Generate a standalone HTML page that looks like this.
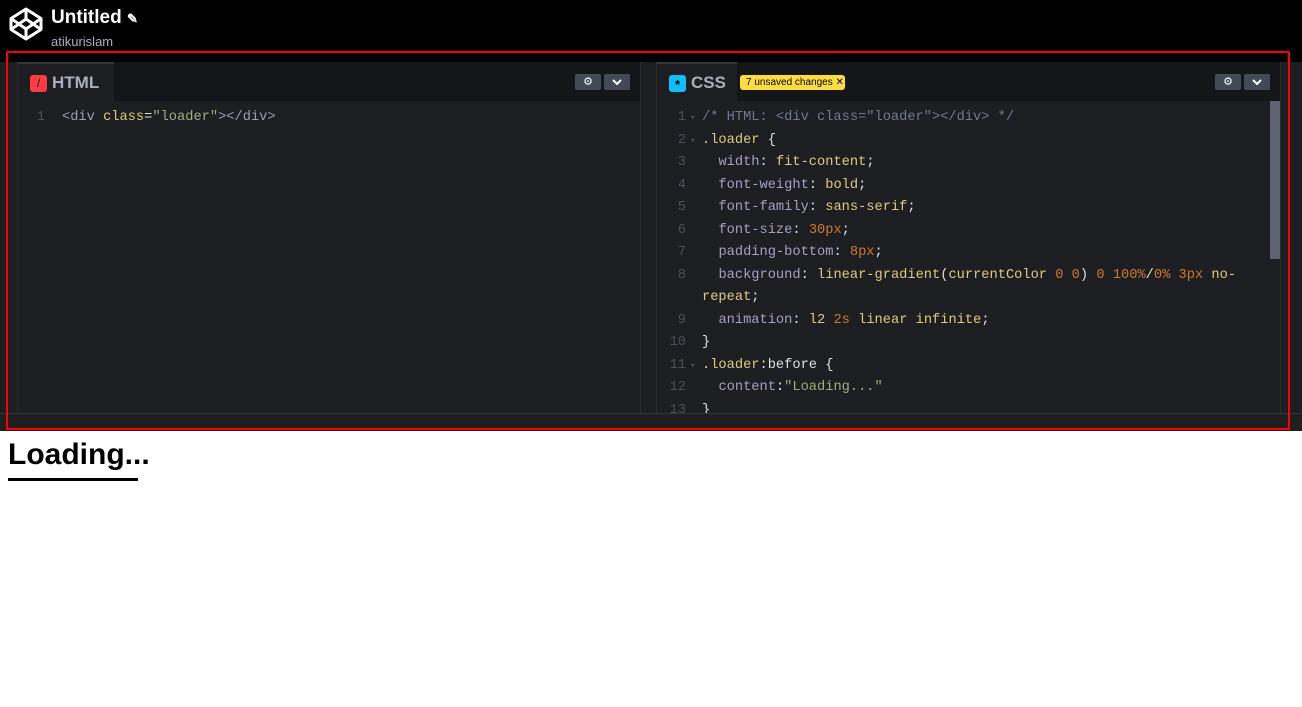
<!DOCTYPE html>
<html><head><meta charset="utf-8"><style>
*{margin:0;padding:0;box-sizing:border-box}
body{width:1302px;height:707px;background:#fff;font-family:"Liberation Sans",sans-serif;position:relative;overflow:hidden}
.top{position:absolute;left:0;top:0;width:1302px;height:431px;background:#000}
.ed{position:absolute;left:0;top:62px;width:1302px;height:369px;background:#1d1e22}
.hdr{position:absolute;top:62px;height:39px;background:#151618}
.tab{position:absolute;top:62px;height:39px;background:#1d1e22;border-top:2px solid #34363e;color:#aaaebc;font-weight:bold;font-size:17px;line-height:37px;padding-left:34px}
.ic{position:absolute;left:12px;top:11px;width:17px;height:17px;border-radius:3px}
.btn{position:absolute;top:74px;height:16px;background:#444857;border-radius:2px}
pre{position:absolute;font-family:"Liberation Mono",monospace;font-size:13.7px;line-height:22.5px;color:#e0e0e0}
.ln{color:#4b4e57;text-align:right}
.p{color:#a99ec2}.v{color:#ddca7e}.n{color:#d0782a}.s{color:#9fae7a}.c{color:#717790}.t{color:#ddca7e}.g{color:#9a9fb0}
</style></head><body>
<div class="top"></div>
<svg style="position:absolute;left:8px;top:6px" width="36" height="36" viewBox="0 0 36 36"><g fill="none" stroke="#fff" stroke-width="3" stroke-linejoin="round"><path d="M18 3L33 12.5V23.5L18 33L3 23.5V12.5Z"/><path d="M3 12.5L18 23 33 12.5M3 23.5L18 13 33 23.5M18 3V13M18 23V33"/></g></svg>
<div style="position:absolute;left:51px;top:7px;color:#fff;font-weight:bold;font-size:19px">Untitled <span style="font-size:13px">✎</span></div>
<div style="position:absolute;left:51px;top:34px;color:#aaaebc;font-size:13px">atikurislam</div>
<div class="ed"></div>
<div class="hdr" style="left:18px;width:622px"></div>
<div class="hdr" style="left:657px;width:623px"></div>
<div style="position:absolute;left:640px;top:62px;width:17px;height:351px;background:#1d1e22;border-left:1px solid #2c2d32;border-right:1px solid #2c2d32"></div>
<div style="position:absolute;left:1280px;top:62px;width:22px;height:351px;background:#1d1e22;border-left:1px solid #2c2d32"></div>
<div style="position:absolute;left:0;top:62px;width:18px;height:351px;background:#1d1e22;border-right:1px solid #2c2d32"></div>
<div class="tab" style="left:18px;width:96px"><div class="ic" style="background:#ff3c41;color:#000;font-size:12px;line-height:17px;text-align:center;font-weight:normal">/</div>HTML</div>
<div class="tab" style="left:657px;width:80px"><div class="ic" style="background:#0ebeff;color:#000;font-size:13px;line-height:19px;text-align:center">*</div>CSS</div>
<div style="position:absolute;left:740px;top:75px;width:105px;height:15px;background:#ffdd40;border-radius:3px;font-size:10px;line-height:15px;color:#000;padding-left:6px">7 unsaved changes ✕</div>
<div class="btn" style="left:575px;width:26px;color:#fff;font-size:11px;text-align:center;line-height:16px">⚙</div>
<div class="btn" style="left:604px;width:26px"></div>
<div class="btn" style="left:1215px;width:26px;color:#fff;font-size:11px;text-align:center;line-height:16px">⚙</div>
<div class="btn" style="left:1244px;width:26px"></div>
<svg style="position:absolute;left:611px;top:78px" width="12" height="8"><path d="M2 2L6 6 10 2" stroke="#fff" stroke-width="2" fill="none"/></svg>
<svg style="position:absolute;left:1251px;top:78px" width="12" height="8"><path d="M2 2L6 6 10 2" stroke="#fff" stroke-width="2" fill="none"/></svg>
<div style="position:absolute;left:1270px;top:101px;width:10px;height:158px;background:#5f6370"></div>
<pre class="ln" style="left:30px;top:107px;width:15px">1</pre>
<pre style="left:62px;top:107px"><span class="g">&lt;div</span> <span class="t">class</span>=<span class="s">"loader"</span><span class="g">&gt;&lt;/div&gt;</span></pre>
<div style="position:absolute;left:660px;top:101px;width:620px;height:312px;overflow:hidden">
<pre class="ln" style="left:2px;top:6px;width:24px">1
2
3
4
5
6
7
8

9
10
11
12
13</pre>
<pre style="left:30px;top:6px;color:#4b4e57;font-size:9px;line-height:22.5px">▾
▾









▾</pre>
<pre style="left:42px;top:6px"><span class="c">/* HTML: &lt;div class="loader"&gt;&lt;/div&gt; */</span>
<span class="v">.loader</span> {
  <span class="p">width</span>: <span class="v">fit-content</span>;
  <span class="p">font-weight</span>: <span class="v">bold</span>;
  <span class="p">font-family</span>: <span class="v">sans-serif</span>;
  <span class="p">font-size</span>: <span class="n">30px</span>;
  <span class="p">padding-bottom</span>: <span class="n">8px</span>;
  <span class="p">background</span>: <span class="v">linear-gradient</span>(<span class="v">currentColor</span> <span class="n">0 0</span>) <span class="n">0 100%</span>/<span class="n">0% 3px</span> <span class="v">no-</span>
<span class="v">repeat</span>;
  <span class="p">animation</span>: <span class="v">l2</span> <span class="n">2s</span> <span class="v">linear infinite</span>;
}
<span class="v">.loader</span>:before {
  <span class="p">content</span>:<span class="s">"Loading..."</span>
}</pre>
</div>
<div style="position:absolute;left:0;top:413px;width:1302px;height:18px;background:#1f1f1f;border-top:1px solid #34363e"></div>
<div style="position:absolute;left:6px;top:51px;width:1284px;height:379px;border:2px solid #f00"></div>
<div style="position:absolute;left:8px;top:437px;font-weight:bold;font-size:30px;line-height:36px;color:#000">Loading...</div>
<div style="position:absolute;left:8px;top:478px;width:130px;height:3px;background:#000"></div>
</body></html>
